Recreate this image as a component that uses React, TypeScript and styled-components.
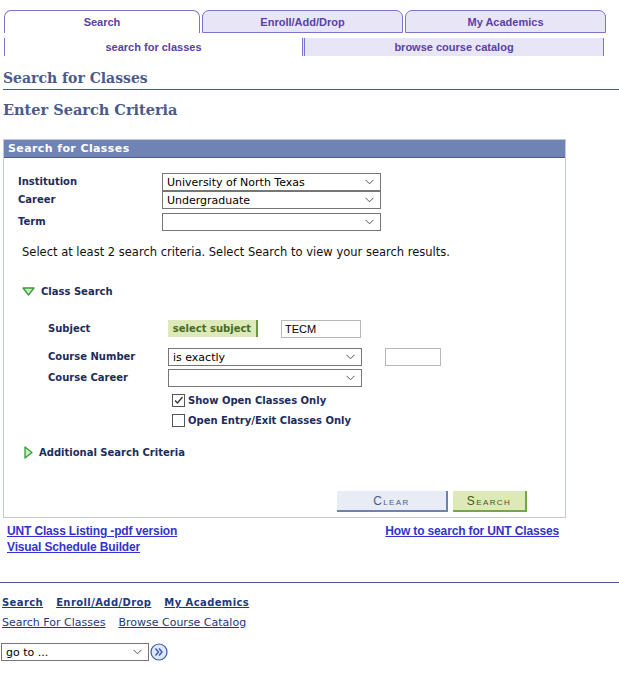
import styled, { createGlobalStyle } from "styled-components";

const GlobalStyle = createGlobalStyle`
  body {
    margin: 0;
    background: #fff;
    font-family: "DejaVu Sans", Verdana, sans-serif;
  }
`;

const Page = styled.div`
  width: 619px;
  padding-top: 10px;
`;

const TabRow = styled.div`
  display: flex;
  gap: 2px;
  padding-left: 4px;
`;

const Tab = styled.div<{ $active?: boolean; $w: number }>`
  width: ${(p) => p.$w}px;
  height: 23px;
  box-sizing: border-box;
  border: 1px solid #7b74cc;
  border-bottom: ${(p) => (p.$active ? "none" : "1px solid #7b74cc")};
  border-radius: 7px 7px 0 0;
  background: ${(p) => (p.$active ? "#fff" : "#e8e6f6")};
  display: flex;
  align-items: center;
  justify-content: center;
  font-family: "Liberation Sans", Arial, sans-serif;
  font-weight: bold;
  font-size: 11px;
  color: #5a3fa6;
`;

const SubTabRow = styled.div`
  display: flex;
  padding-left: 4px;
  margin-top: 5px;
`;

const SubTab = styled.div<{ $active?: boolean }>`
  width: ${(p) => (p.$active ? "298px" : "302px")};
  height: 18px;
  box-sizing: border-box;
  border-left: ${(p) => (p.$active ? "1px solid #7b74cc" : "3px double #7b74cc")};
  border-right: ${(p) => (p.$active ? "none" : "1px solid #7b74cc")};
  background: ${(p) => (p.$active ? "#fff" : "#e8e6f6")};
  display: flex;
  align-items: center;
  justify-content: center;
  font-family: "Liberation Sans", Arial, sans-serif;
  font-weight: bold;
  font-size: 11px;
  color: #5a3fa6;
`;

const PageTitle = styled.h1`
  margin: 14px 0 0 3px;
  padding: 0 0 3px;
  border-bottom: 1px solid #4b5a8c;
  font-family: "DejaVu Serif", Georgia, serif;
  font-weight: bold;
  font-size: 14px;
  color: #4b5a8c;
`;

const SubTitle = styled.h2`
  margin: 11px 0 0 3px;
  font-family: "DejaVu Serif", Georgia, serif;
  font-weight: bold;
  font-size: 14.5px;
  color: #4b5a8c;
`;

const Box = styled.div`
  margin: 21px 0 0 3px;
  width: 563px;
  box-sizing: border-box;
  border: 1px solid #c3c8dc;
  padding-bottom: 5px;
`;

const BoxHeader = styled.div`
  height: 18px;
  box-sizing: border-box;
  background: #7083b5;
  border-bottom: 1px solid #4b5a8c;
  color: #fff;
  font-weight: bold;
  font-size: 11px;
  letter-spacing: 0.4px;
  padding-left: 4px;
  line-height: 17px;
`;

const FieldRow = styled.div<{ $mt?: number; $indent?: number }>`
  display: flex;
  align-items: flex-start;
  margin-top: ${(p) => p.$mt ?? 0}px;
  padding-left: ${(p) => p.$indent ?? 14}px;
`;

const Label = styled.div<{ $w: number }>`
  width: ${(p) => p.$w}px;
  flex-shrink: 0;
  font-weight: bold;
  font-size: 10px;
  color: #1c2c5c;
  padding-top: 3px;
`;

const SelectWrap = styled.span`
  position: relative;
  display: inline-flex;
`;

const Select = styled.select<{ $w: number }>`
  appearance: none;
  width: ${(p) => p.$w}px;
  height: 18px;
  box-sizing: border-box;
  border: 1px solid #767676;
  border-radius: 0;
  background: #fff;
  font-family: "DejaVu Sans", Verdana, sans-serif;
  font-size: 11px;
  color: #000;
  padding: 0 0 0 4px;
  outline: none;
`;

const Chevron = styled.svg`
  position: absolute;
  right: 7px;
  top: 6px;
  pointer-events: none;
`;

const TextInput = styled.input<{ $w: number; $ml: number }>`
  width: ${(p) => p.$w}px;
  height: 18px;
  box-sizing: border-box;
  margin: 0 0 0 ${(p) => p.$ml}px;
  border: 1px solid #b8b8b8;
  font-family: "Liberation Sans", Arial, sans-serif;
  font-size: 11px;
  padding: 0 3px;
`;

const Hint = styled.p`
  margin: 14px 0 0 18px;
  font-size: 11.5px;
  color: #111;
`;

const Toggle = styled.div<{ $mt: number; $indent: number }>`
  display: flex;
  align-items: center;
  gap: 6px;
  margin-top: ${(p) => p.$mt}px;
  padding-left: ${(p) => p.$indent}px;
  font-weight: bold;
  font-size: 10px;
  color: #1c2c5c;
`;

const SubjectButton = styled.button`
  width: 90px;
  height: 17px;
  box-sizing: border-box;
  border: none;
  border-right: 2px solid #6c9a3a;
  background: #dde9b8;
  font-family: "DejaVu Sans", Verdana, sans-serif;
  font-weight: bold;
  font-size: 10px;
  color: #4a6a1e;
  padding: 0;
`;

const CheckRow = styled.label<{ $mt: number }>`
  display: flex;
  align-items: flex-end;
  gap: 3px;
  margin-top: ${(p) => p.$mt}px;
  padding-left: 168px;
  font-weight: bold;
  font-size: 10px;
  line-height: 12px;
  color: #1c2c5c;
`;

const CheckBox = styled.span`
  width: 13px;
  height: 13px;
  box-sizing: border-box;
  border: 1px solid #555;
  background: #fff;
  display: flex;
  align-items: center;
  justify-content: center;
`;

const ButtonRow = styled.div`
  display: flex;
  justify-content: flex-end;
  gap: 5px;
  margin-top: 32px;
  padding-right: 38px;
`;

const ActionButton = styled.button<{ $green?: boolean }>`
  width: ${(p) => (p.$green ? "74px" : "111px")};
  height: 21px;
  box-sizing: border-box;
  border: none;
  border-right: 2px solid ${(p) => (p.$green ? "#74a844" : "#7080b0")};
  border-bottom: 2px solid ${(p) => (p.$green ? "#74a844" : "#7080b0")};
  background: ${(p) => (p.$green ? "#dde9b8" : "#e8ecf4")};
  color: ${(p) => (p.$green ? "#3c5a22" : "#4b5a8c")};
  font-family: "Liberation Sans", Arial, sans-serif;
  font-size: 12px;
  font-variant: small-caps;
  letter-spacing: 1.4px;
  padding: 0;
`;

const LinkArea = styled.div`
  display: flex;
  justify-content: space-between;
  width: 559px;
  padding: 6px 0 0 7px;
  box-sizing: border-box;
`;

const LinkColumn = styled.div`
  display: flex;
  flex-direction: column;
  gap: 2px;
`;

const BlueLink = styled.a`
  font-family: "Liberation Sans", Arial, sans-serif;
  font-weight: bold;
  font-size: 12px;
  letter-spacing: -0.15px;
  color: #3333cc;
  text-decoration: underline;
  line-height: 14px;
`;

const Divider = styled.hr`
  margin: 28px 0 0;
  border: none;
  border-top: 1px solid #4b5a8c;
`;

const FooterLinks = styled.div<{ $mt: number }>`
  display: flex;
  gap: 13px;
  margin-top: ${(p) => p.$mt}px;
  padding-left: 2px;
`;

const FooterLink = styled.a<{ $bold?: boolean }>`
  font-size: ${(p) => (p.$bold ? "10px" : "11px")};
  font-weight: ${(p) => (p.$bold ? "bold" : "normal")};
  letter-spacing: ${(p) => (p.$bold ? "0.4px" : "0")};
  color: #1c3a7c;
  text-decoration: underline;
`;

const GoRow = styled.div`
  display: flex;
  align-items: center;
  gap: 1px;
  margin-top: 14px;
  padding-left: 1px;
`;

const TriangleDown = () => (
  <svg width="13" height="9" viewBox="0 0 13 9">
    <path d="M1 1 L12 1 L6.5 8 Z" fill="#c8ecc0" stroke="#3a9a3a" strokeWidth="1.3" strokeLinejoin="round" />
  </svg>
);

const TriangleRight = () => (
  <svg width="9" height="13" viewBox="0 0 9 13">
    <path d="M1 1 L8 6.5 L1 12 Z" fill="#c8ecc0" stroke="#3a9a3a" strokeWidth="1.3" strokeLinejoin="round" />
  </svg>
);

const Check = () => (
  <svg width="11" height="11" viewBox="0 0 11 11">
    <path d="M2 5.5 L4.5 8 L9.5 2" fill="none" stroke="#333" strokeWidth="1.3" />
  </svg>
);

const GoIcon = () => (
  <svg width="18" height="18" viewBox="0 0 18 18">
    <circle cx="9" cy="9" r="8" fill="#dfe6f6" stroke="#3b5aa8" strokeWidth="1.2" />
    <path d="M5.5 5.5 L8.5 9 L5.5 12.5 M9 5.5 L12 9 L9 12.5" fill="none" stroke="#3b5aa8" strokeWidth="1.4" />
  </svg>
);

const Dropdown = ({ w, value, text }: { w: number; value: string; text: string }) => (
  <SelectWrap>
    <Select $w={w} defaultValue={value}>
      <option value={value}>{text}</option>
    </Select>
    <Chevron width="9" height="6" viewBox="0 0 9 6">
      <path d="M0.5 0.8 L4.5 4.8 L8.5 0.8" fill="none" stroke="#555" strokeWidth="1" />
    </Chevron>
  </SelectWrap>
);

export default function App() {
  return (
    <Page>
      <GlobalStyle />
      <TabRow>
        <Tab $active $w={196}>Search</Tab>
        <Tab $w={201}>Enroll/Add/Drop</Tab>
        <Tab $w={201}>My Academics</Tab>
      </TabRow>
      <SubTabRow>
        <SubTab $active>search for classes</SubTab>
        <SubTab>browse course catalog</SubTab>
      </SubTabRow>

      <PageTitle>Search for Classes</PageTitle>
      <SubTitle>Enter Search Criteria</SubTitle>

      <Box>
        <BoxHeader>Search for Classes</BoxHeader>
        <FieldRow $mt={15}>
          <Label $w={144}>Institution</Label>
          <Dropdown w={219} value="unt" text="University of North Texas" />
        </FieldRow>
        <FieldRow>
          <Label $w={144}>Career</Label>
          <Dropdown w={219} value="ug" text="Undergraduate" />
        </FieldRow>
        <FieldRow $mt={4}>
          <Label $w={144}>Term</Label>
          <Dropdown w={219} value="" text="" />
        </FieldRow>

        <Hint>Select at least 2 search criteria. Select Search to view your search results.</Hint>

        <Toggle $mt={27} $indent={18}>
          <TriangleDown />
          Class Search
        </Toggle>

        <FieldRow $mt={23} $indent={44}>
          <Label $w={120}>Subject</Label>
          <SubjectButton>select subject</SubjectButton>
          <TextInput $w={80} $ml={23} defaultValue="TECM" />
        </FieldRow>
        <FieldRow $mt={10} $indent={44}>
          <Label $w={120}>Course Number</Label>
          <Dropdown w={194} value="e" text="is exactly" />
          <TextInput $w={56} $ml={23} defaultValue="" />
        </FieldRow>
        <FieldRow $mt={3} $indent={44}>
          <Label $w={120}>Course Career</Label>
          <Dropdown w={194} value="" text="" />
        </FieldRow>

        <CheckRow $mt={7}>
          <CheckBox>
            <Check />
          </CheckBox>
          Show Open Classes Only
        </CheckRow>
        <CheckRow $mt={7}>
          <CheckBox />
          Open Entry/Exit Classes Only
        </CheckRow>

        <Toggle $mt={19} $indent={20}>
          <TriangleRight />
          Additional Search Criteria
        </Toggle>

        <ButtonRow>
          <ActionButton>Clear</ActionButton>
          <ActionButton $green>Search</ActionButton>
        </ButtonRow>
      </Box>

      <LinkArea>
        <LinkColumn>
          <BlueLink href="#">UNT Class Listing -pdf version</BlueLink>
          <BlueLink href="#">Visual Schedule Builder</BlueLink>
        </LinkColumn>
        <BlueLink href="#">How to search for UNT Classes</BlueLink>
      </LinkArea>

      <Divider />

      <FooterLinks $mt={14}>
        <FooterLink $bold href="#">Search</FooterLink>
        <FooterLink $bold href="#">Enroll/Add/Drop</FooterLink>
        <FooterLink $bold href="#">My Academics</FooterLink>
      </FooterLinks>
      <FooterLinks $mt={8}>
        <FooterLink href="#">Search For Classes</FooterLink>
        <FooterLink href="#">Browse Course Catalog</FooterLink>
      </FooterLinks>

      <GoRow>
        <Dropdown w={148} value="g" text="go to ..." />
        <GoIcon />
      </GoRow>
    </Page>
  );
}
